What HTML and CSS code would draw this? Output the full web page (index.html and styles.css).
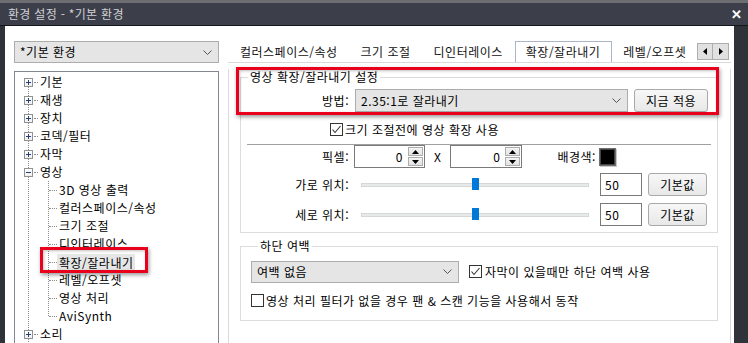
FILE: index.html
```html
<!DOCTYPE html>
<html lang="ko">
<head>
    <meta charset="UTF-8">
    <title>환경 설정 - *기본 환경</title>
    <link rel="stylesheet" href="styles.css">
</head>
<body>
<div class="window">
    <div class="titlebar">
        <span class="title">환경 설정 - *기본 환경</span>
        <span class="close">✕</span>
    </div>

    <div class="client">
        <!-- 왼쪽: 프리셋 + 트리 -->
        <div class="sidebar">
            <div class="combo preset">
                <span>*기본 환경</span>
                <svg class="chev" width="9" height="5" viewBox="0 0 9 5"><polyline points="0.5,0.5 4.5,4.5 8.5,0.5"/></svg>
            </div>
            <div class="tree">
                <div class="node first"><span class="exp plus"></span><span class="hd"></span><span class="txt">기본</span></div>
                <div class="node"><span class="exp plus"></span><span class="hd"></span><span class="txt">재생</span></div>
                <div class="node"><span class="exp plus"></span><span class="hd"></span><span class="txt">장치</span></div>
                <div class="node"><span class="exp plus"></span><span class="hd"></span><span class="txt">코덱/필터</span></div>
                <div class="node"><span class="exp plus"></span><span class="hd"></span><span class="txt">자막</span></div>
                <div class="node"><span class="exp minus"></span><span class="hd"></span><span class="txt">영상</span></div>
                <div class="leaf"><span class="txt">3D 영상 출력</span></div>
                <div class="leaf"><span class="txt">컬러스페이스/속성</span></div>
                <div class="leaf"><span class="txt">크기 조절</span></div>
                <div class="leaf"><span class="txt">디인터레이스</span></div>
                <div class="leaf sel"><span class="txt">확장/잘라내기</span></div>
                <div class="leaf"><span class="txt">레벨/오프셋</span></div>
                <div class="leaf"><span class="txt">영상 처리</span></div>
                <div class="leaf last"><span class="txt">AviSynth</span></div>
                <div class="node"><span class="exp plus"></span><span class="hd"></span><span class="txt">소리</span></div>
            </div>
        </div>

        <!-- 오른쪽: 탭 페이지 -->
        <div class="main">
            <div class="tabbar">
                <div class="tabs">
                    <span class="tab">컬러스페이스/속성</span>
                    <span class="tab">크기 조절</span>
                    <span class="tab">디인터레이스</span>
                    <span class="tab active">확장/잘라내기</span>
                    <span class="tab">레벨/오프셋</span>
                </div>
                <div class="scroll">
                    <span class="sbtn"><svg width="4" height="7" viewBox="0 0 4 7"><polygon points="4,0 0,3.5 4,7"/></svg></span>
                    <span class="sbtn"><svg width="4" height="7" viewBox="0 0 4 7"><polygon points="0,0 4,3.5 0,7"/></svg></span>
                </div>
            </div>

            <div class="page">
                <fieldset class="group crop">
                    <legend>영상 확장/잘라내기 설정</legend>
                    <div class="row">
                        <span class="lbl">방법:</span>
                        <div class="combo method">
                            <span>2.35:1로 잘라내기</span>
                            <svg class="chev" width="9" height="5" viewBox="0 0 9 5"><polyline points="0.5,0.5 4.5,4.5 8.5,0.5"/></svg>
                        </div>
                        <button class="btn apply">지금 적용</button>
                    </div>
                    <label class="check pre-scale">
                        <svg class="box" width="13" height="13" viewBox="0 0 13 13"><rect x="0.5" y="0.5" width="12" height="12"/><polyline class="tick" points="2.5,6.5 5,9.5 10.5,3"/></svg>
                        <span>크기 조절전에 영상 확장 사용</span>
                    </label>
                    <div class="sep"></div>
                    <div class="row">
                        <span class="lbl">픽셀:</span>
                        <div class="spin first-spin">
                            <span class="val">0</span>
                            <span class="arrows">
                                <span class="arr"><svg width="7" height="4" viewBox="0 0 7 4"><polygon points="0,4 3.5,0 7,4"/></svg></span>
                                <span class="arr"><svg width="7" height="4" viewBox="0 0 7 4"><polygon points="0,0 3.5,4 7,0"/></svg></span>
                            </span>
                        </div>
                        <span class="times">X</span>
                        <div class="spin second-spin">
                            <span class="val">0</span>
                            <span class="arrows">
                                <span class="arr"><svg width="7" height="4" viewBox="0 0 7 4"><polygon points="0,4 3.5,0 7,4"/></svg></span>
                                <span class="arr"><svg width="7" height="4" viewBox="0 0 7 4"><polygon points="0,0 3.5,4 7,0"/></svg></span>
                            </span>
                        </div>
                        <span class="bg-lbl">배경색:</span>
                        <span class="swatch"></span>
                    </div>
                    <div class="row pos-h">
                        <span class="lbl">가로 위치:</span>
                        <div class="slider"><span class="thumb" style="left: 50%"></span></div>
                        <span class="edit">50</span>
                        <button class="btn reset">기본값</button>
                    </div>
                    <div class="row pos-v">
                        <span class="lbl">세로 위치:</span>
                        <div class="slider"><span class="thumb" style="left: 50%"></span></div>
                        <span class="edit">50</span>
                        <button class="btn reset">기본값</button>
                    </div>
                </fieldset>

                <fieldset class="group margin">
                    <legend>하단 여백</legend>
                    <div class="row">
                        <div class="combo margin-mode">
                            <span>여백 없음</span>
                            <svg class="chev" width="9" height="5" viewBox="0 0 9 5"><polyline points="0.5,0.5 4.5,4.5 8.5,0.5"/></svg>
                        </div>
                        <label class="check sub-only">
                            <svg class="box" width="13" height="13" viewBox="0 0 13 13"><rect x="0.5" y="0.5" width="12" height="12"/><polyline class="tick" points="2.5,6.5 5,9.5 10.5,3"/></svg>
                            <span>자막이 있을때만 하단 여백 사용</span>
                        </label>
                    </div>
                    <label class="check pan-scan">
                        <svg class="box" width="13" height="13" viewBox="0 0 13 13"><rect x="0.5" y="0.5" width="12" height="12"/></svg>
                        <span>영상 처리 필터가 없을 경우 팬 &amp; 스캔 기능을 사용해서 동작</span>
                    </label>
                </fieldset>
            </div>
        </div>
    </div>

    <!-- 빨간 강조 표시 -->
    <div class="mark mark-group"></div>
    <div class="mark mark-tree"></div>
</div>
</body>
</html>
```

FILE: styles.css
```css
/* 기본 */
* {
    box-sizing: border-box;
}

body {
    margin: 0;
    background: #2f3139;
    font-family: "Noto Sans CJK KR", "Noto Sans", sans-serif;
    font-size: 12px;
    letter-spacing: 0.5px;
    color: #000;
}

.window {
    position: relative;
    width: 748px;
    height: 343px;
    overflow: hidden;
    background: #30323a;
}

/* 제목 표시줄 */
.titlebar {
    height: 26px;
    display: flex;
    align-items: center;
    justify-content: space-between;
    padding: 2px 6px 0 8px;
    background: linear-gradient(#6d6e72 0, #6d6e72 3px, #3c3f49 3px);
    border-bottom: 1px solid #15161a;
    color: #cfd0d4;
    font-size: 12px;
    letter-spacing: 0.3px;
}

.close {
    color: #fff;
    font-size: 13px;
    font-weight: bold;
}

/* 클라이언트 영역 */
.client {
    display: flex;
    margin-left: 5px;
    width: 729px;
    height: 317px;
    background: #fff;
}

.sidebar {
    width: 223px;
    flex: none;
    padding: 15px 0 0 9px;
}

/* 콤보 박스 */
.combo {
    display: flex;
    align-items: center;
    justify-content: space-between;
    height: 22px;
    padding: 0 6px 0 5px;
    background: #e5e5e5;
    border: 1px solid #acacac;
    line-height: 1;
}

.chev polyline {
    fill: none;
    stroke: #555;
    stroke-width: 1;
}

.preset {
    width: 205px;
}

/* 트리 */
.tree {
    margin-top: 8px;
    width: 205px;
    height: 290px;
    padding-top: 1px;
    border: 1px solid #828790;
}

.node,
.leaf {
    display: flex;
    align-items: center;
    height: 18px;
    line-height: 16px;
    background-image: linear-gradient(#8c8c8c 50%, transparent 50%);
    background-size: 1px 2px;
    background-repeat: repeat-y;
    background-position: 13px 0;
}

.node.first {
    background-image: linear-gradient(#fff, #fff), linear-gradient(#8c8c8c 50%, transparent 50%);
    background-size: 1px 9px, 1px 2px;
    background-repeat: no-repeat, repeat-y;
    background-position: 13px 0, 13px 0;
}

.exp {
    width: 9px;
    height: 9px;
    margin-left: 9px;
    border: 1px solid #919191;
    background-color: #fff;
}

.exp.plus {
    background: linear-gradient(#25407a, #25407a) center / 5px 1px no-repeat,
                linear-gradient(#25407a, #25407a) center / 1px 5px no-repeat,
                linear-gradient(#fff, #f0f0f0);
}

.exp.minus {
    background: linear-gradient(#25407a, #25407a) center / 5px 1px no-repeat,
                linear-gradient(#fff, #f0f0f0);
}

.hd {
    width: 4px;
    margin-left: 1px;
    border-top: 1px dotted #8c8c8c;
}

.txt {
    padding: 0 2px;
    white-space: nowrap;
}

.leaf {
    padding-left: 34px;
    background-image: linear-gradient(#8c8c8c 50%, transparent 50%), linear-gradient(#8c8c8c 50%, transparent 50%);
    background-size: 1px 2px, 1px 2px;
    background-repeat: repeat-y, repeat-y;
    background-position: 13px 0, 33px 0;
}

.leaf::before {
    content: '';
    width: 8px;
    border-top: 1px dotted #8c8c8c;
}

.leaf.last {
    background-image: linear-gradient(#fff, #fff), linear-gradient(#8c8c8c 50%, transparent 50%), linear-gradient(#8c8c8c 50%, transparent 50%);
    background-size: 1px 9px, 1px 2px, 1px 2px;
    background-repeat: no-repeat, repeat-y, repeat-y;
    background-position: 33px 9px, 13px 0, 33px 0;
}

.leaf.sel .txt {
    background: #e6e6e6;
    line-height: 17px;
}

/* 탭 */
.main {
    width: 503px;
    flex: none;
}

.tabbar {
    display: flex;
    height: 37px;
    border-bottom: 1px solid #d9d9d9;
}

.tabs {
    flex: 1;
    display: flex;
    align-items: flex-end;
    overflow: hidden;
    padding-left: 1px;
}

.tab {
    flex: none;
    height: 21px;
    line-height: 19px;
    padding: 0 11px 0 10px;
    border: 1px solid transparent;
    border-bottom: none;
    white-space: nowrap;
    color: #111;
}

.tab.active {
    height: 22px;
    margin-bottom: -1px;
    background: #fff;
    border-color: #acb4c8;
    position: relative;
}

.scroll {
    display: flex;
    margin: 17px 2px 0 2px;
}

.sbtn {
    width: 16px;
    height: 17px;
    display: flex;
    align-items: center;
    justify-content: center;
    background: #e1e1e1;
    border: 1px solid #adadad;
}

.sbtn + .sbtn {
    border-left: none;
}

/* 탭 페이지 */
.page {
    height: 280px;
    padding: 0 12px 0 11px;
    border-left: 1px solid #d9d9d9;
    border-right: 1px solid #d9d9d9;
}

.group {
    margin: 0;
    min-width: 0;
    padding: 4px 0 6px 0;
    border: 1px solid #dcdcdc;
}

.group legend {
    margin-left: 7px;
    padding: 0 2px;
    line-height: 16px;
}

.crop {
    margin-top: 6px;
}

.row {
    display: flex;
    align-items: center;
    height: 23px;
}

.lbl {
    width: 108px;
    text-align: right;
    flex: none;
}

.method {
    width: 273px;
    margin-left: 6px;
    height: 23px;
}

.btn {
    height: 23px;
    padding: 0;
    font: inherit;
    letter-spacing: inherit;
    color: #000;
    background: linear-gradient(#f7f7f7, #e8e8e8);
    border: 1px solid #a9a9a9;
    border-radius: 3px;
}

.apply {
    width: 74px;
    margin-left: 6px;
}

.check {
    display: flex;
    align-items: center;
    height: 16px;
}

.check .box rect {
    fill: #fff;
    stroke: #333;
}

.check .tick {
    fill: none;
    stroke: #333;
    stroke-width: 1.1;
}

.check span {
    margin-left: 2px;
}

.pre-scale {
    margin: 9px 0 0 89px;
}

.sep {
    height: 1px;
    margin: 7px 6px 0 6px;
    background: #a0a0a0;
}

/* 스핀 박스 */
.spin {
    display: flex;
    align-items: center;
    justify-content: flex-end;
    height: 23px;
    padding: 1px;
    border: 1px solid #7a7a7a;
}

.first-spin {
    width: 71px;
    margin-left: 5px;
}

.second-spin {
    width: 72px;
    margin-left: 9px;
}

.val {
    margin-right: 5px;
}

.arrows {
    display: flex;
    flex-direction: column;
    gap: 1px;
}

.arr {
    width: 15px;
    height: 9px;
    display: flex;
    align-items: center;
    justify-content: center;
    background: linear-gradient(#f4f4f4, #e2e2e2);
    border: 1px solid #adadad;
}

.times {
    margin-left: 9px;
}

.bg-lbl {
    margin-left: 35px;
}

.swatch {
    width: 17px;
    height: 18px;
    margin-left: 3px;
    background: #000;
    border: 1px solid #6e6e6e;
    box-shadow: inset 0 0 0 1px #444, 1px 1px 0 #c8c8c8;
}

/* 슬라이더 */
.pos-h {
    margin-top: 5px;
}

.pos-v {
    margin-top: 7px;
}

.slider {
    position: relative;
    width: 228px;
    height: 4px;
    margin-left: 12px;
    background: #e7eaea;
    border: 1px solid #d6d6d6;
}

.thumb {
    position: absolute;
    top: -6px;
    width: 7px;
    height: 12px;
    margin-left: -3px;
    background: #0078d7;
}

.edit {
    display: flex;
    align-items: center;
    width: 42px;
    height: 23px;
    margin-left: 11px;
    padding-left: 4px;
    border: 1px solid #7a7a7a;
}

.reset {
    width: 59px;
    margin-left: 6px;
}

/* 하단 여백 */
.margin {
    margin-top: 5px;
    padding: 6px 0 12px 10px;
}

.margin-mode {
    width: 208px;
}

.sub-only {
    margin-left: 10px;
}

.sub-only span {
    margin-left: 3px;
}

.pan-scan {
    margin-top: 9px;
}

/* 빨간 강조 */
.mark {
    position: absolute;
    border: 3px solid #e8001c;
    box-shadow: 1px 2px 4px rgba(0, 0, 0, 0.4), inset 1px 1px 3px rgba(0, 0, 0, 0.25);
}

.mark-group {
    left: 236px;
    top: 67px;
    width: 483px;
    height: 48px;
}

.mark-tree {
    left: 40px;
    top: 247px;
    width: 108px;
    height: 26px;
}
```
